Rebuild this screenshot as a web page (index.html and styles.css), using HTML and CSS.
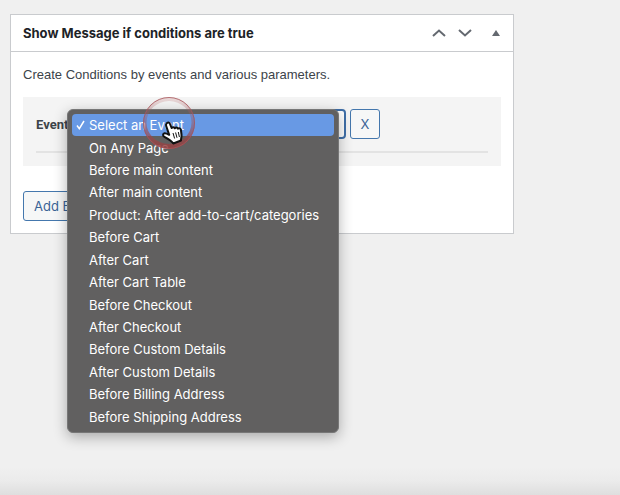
FILE: index.html
```
<!DOCTYPE html>
<html lang="en">
<head>
  <meta charset="UTF-8">
  <meta name="viewport" content="width=device-width, initial-scale=1.0">
  <title>Show Message</title>
  <link rel="stylesheet" href="styles.css">
</head>
<body>

  <section class="postbox">

    <!-- Panel header -->
    <div class="postbox-header">
      <h2>Show Message if conditions are true</h2>
      <div class="handle-actions">
        <button type="button" class="handle" aria-label="Move up">
          <svg width="14" height="8" viewBox="0 0 14 8"><path d="M1 7 L7 1.5 L13 7"/></svg>
        </button>
        <button type="button" class="handle" aria-label="Move down">
          <svg width="14" height="8" viewBox="0 0 14 8"><path d="M1 1 L7 6.5 L13 1"/></svg>
        </button>
        <button type="button" class="handle toggle" aria-label="Toggle panel">
          <svg width="8" height="6" viewBox="0 0 8 6"><path d="M4 0 L8 6 L0 6 Z"/></svg>
        </button>
      </div>
    </div>

    <!-- Panel content -->
    <div class="inside">
      <p>Create Conditions by events and various parameters.</p>

      <div class="conditions">
        <div class="condition-row">
          <label for="event">Event</label>
          <div class="event-field">
            <select id="event">
              <option>Select an Event</option>
            </select>

            <!-- Open event list -->
            <ul class="event-menu" role="listbox" aria-label="Event">
              <li class="selected" role="option" aria-selected="true">
                <svg class="check" width="9" height="10" viewBox="0 0 9 10"><path d="M1 5.5 L3.3 8.6 L8 1"/></svg>
                Select an Event
              </li>
              <li role="option">On Any Page</li>
              <li role="option">Before main content</li>
              <li role="option">After main content</li>
              <li role="option">Product: After add-to-cart/categories</li>
              <li role="option">Before Cart</li>
              <li role="option">After Cart</li>
              <li role="option">After Cart Table</li>
              <li role="option">Before Checkout</li>
              <li role="option">After Checkout</li>
              <li role="option">Before Custom Details</li>
              <li role="option">After Custom Details</li>
              <li role="option">Before Billing Address</li>
              <li role="option">Before Shipping Address</li>
            </ul>

            <!-- Pointer with click ring -->
            <svg class="pointer" width="54" height="54" viewBox="0 0 54 54" aria-hidden="true">
              <defs>
                <linearGradient id="ring" x1="0" y1="0" x2="0" y2="1">
                  <stop offset="0" stop-color="#c07070" stop-opacity="0.2"/>
                  <stop offset="0.4" stop-color="#a05058" stop-opacity="0.35"/>
                  <stop offset="1" stop-color="#944040" stop-opacity="0.9"/>
                </linearGradient>
              </defs>
              <path fill="url(#ring)" fill-rule="evenodd" d="M27 1 A26 26 0 1 1 27 53 A26 26 0 1 1 27 1 Z M27 5 A22.500 21.500 0 1 0 27 48 A22.500 21.500 0 1 0 27 5 Z"/>
              <circle cx="27" cy="27" r="25.500" fill="none" stroke="#a8555a" stroke-opacity="0.8"/>
              <path class="hand" d="M24.500 27.500 C25.500 25.800 27.500 26.200 28 27.800 L29.600 32 C30.700 31 32.300 31.200 32.800 32.300 C33.900 31.200 35.300 31.400 35.900 32.600 C37.300 31.800 38.500 32.300 38.900 33.800 L39.500 38.500 C39.800 41 38.900 42.500 39 44.500 L31.300 47.500 C29.500 44.800 26.500 43.200 22.500 41 C20.400 39.700 20.700 37.600 22.700 37.300 C24.200 37.200 25.500 37.900 27.200 38.800 L24.200 30.200 C23.800 29.200 23.900 28.400 24.500 27.500 Z"/>
              <path class="fingers" d="M31 37 L32.600 42.500 M33.600 36.500 L35 41.800 M36.300 36 L37.400 41"/>
            </svg>
          </div>
          <button type="button" class="button remove">X</button>
        </div>
        <hr>
      </div>

      <button type="button" class="button">Add Event</button>
    </div>

  </section>

</body>
</html>
```

FILE: styles.css
```
* {
  margin: 0;
  padding: 0;
  box-sizing: border-box;
}

body {
  min-height: 100vh;
  padding: 14px 106px 0 10px;
  background: #f0f0f0 linear-gradient(to top, #dedede, #ebebeb 14px, #f0f0f0 28px) no-repeat;
  color: #3c434a;
  font-family: Inter, "Liberation Sans", sans-serif;
  font-size: 13px;
}

/* Panel */
.postbox {
  background-color: #fff;
  border: 1px solid #c9cbce;
}

.postbox-header {
  display: flex;
  align-items: center;
  justify-content: space-between;
  height: 37px;
  padding: 0 11px 0 12px;
  border-bottom: 1px solid #c9cbce;
}

.postbox-header h2 {
  color: #1d2327;
  font-size: 13px;
  font-weight: 700;
}

.handle-actions {
  display: flex;
  align-items: center;
  gap: 12px;
}

.handle {
  display: flex;
  background: none;
  border: none;
  cursor: pointer;
}

.handle path {
  fill: none;
  stroke: #646970;
  stroke-width: 2;
}

.toggle {
  padding: 0 2px 0 8px;
}

.toggle path {
  fill: #646970;
  stroke: none;
}

.inside {
  padding: 12px;
}

.inside p {
  font-family: "Liberation Sans", Arial, sans-serif;
  line-height: 21px;
}

/* Conditions */
.conditions {
  margin: 12px 0 25px;
  padding: 12px 13px 13px;
  background-color: #f4f4f4;
}

.condition-row {
  display: flex;
  align-items: center;
  gap: 4px;
}

.condition-row label {
  width: 36px;
  font-family: Roboto, "Liberation Sans", sans-serif;
  font-weight: 700;
}

.conditions hr {
  margin-top: 12px;
  border: none;
  border-top: 2px solid #e3e3e3;
}

.event-field {
  position: relative;
}

.event-field select {
  display: block;
  width: 270px;
  height: 30px;
  padding: 0 8px;
  background-color: #fff;
  border: 2px solid #3f6fa8;
  border-radius: 4px;
  color: #2c3338;
  font: inherit;
  appearance: none;
}

.button {
  height: 30px;
  padding: 0 10px;
  background-color: #f6f7f7;
  border: 1px solid #4477ad;
  border-radius: 3px;
  color: #3a6396;
  font: inherit;
  cursor: pointer;
}

.remove {
  width: 30px;
  padding: 0;
}

/* Event list */
.event-menu {
  position: absolute;
  top: 0;
  left: -9px;
  display: grid;
  grid-auto-rows: 1fr;
  width: 272px;
  height: 324px;
  padding: 4px;
  background-color: #616060;
  border: 1px solid #777;
  border-radius: 6px;
  box-shadow: 0 4px 14px rgba(0, 0, 0, 0.3);
  color: #fff;
  list-style: none;
}

.event-menu li {
  display: flex;
  align-items: center;
  padding-left: 17px;
  border-radius: 4px;
  white-space: nowrap;
}

.event-menu .selected {
  gap: 4px;
  padding-left: 4px;
  background-color: #6899e4;
}

.check {
  fill: none;
  stroke: #fff;
  stroke-width: 1.5;
}

/* Pointer */
.pointer {
  position: absolute;
  top: -13px;
  left: 66px;
  pointer-events: none;
}

.hand {
  fill: #fff;
  stroke: #111;
  stroke-width: 2;
  stroke-linejoin: round;
}

.fingers {
  fill: none;
  stroke: #111;
  stroke-width: 1;
}
```
